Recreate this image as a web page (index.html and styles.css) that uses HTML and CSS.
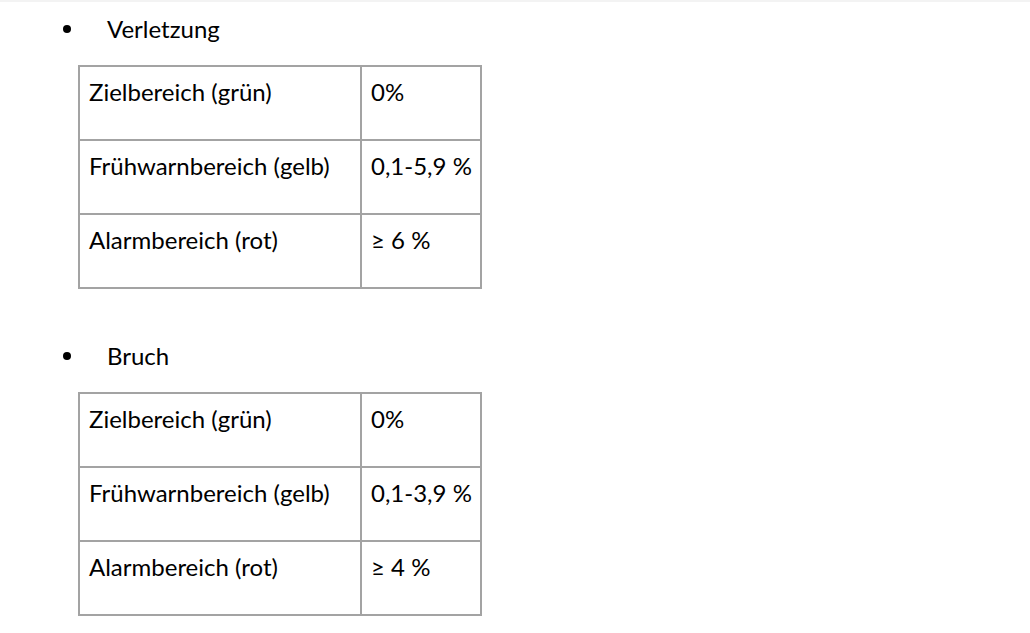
FILE: index.html
```html
<!DOCTYPE html>
<html lang="de">
<head>
<meta charset="utf-8">
<title>Schwellenwerte</title>
<link rel="stylesheet" href="styles.css">
</head>
<body>
<main class="page">
  <section class="block">
    <div class="item"><span class="bullet"></span><span class="item-text">Verletzung</span></div>
    <table class="ranges">
      <colgroup><col class="c1"><col class="c2"></colgroup>
      <tr><td>Zielbereich (grün)</td><td>0%</td></tr>
      <tr><td>Frühwarnbereich (gelb)</td><td>0,1-5,9 %</td></tr>
      <tr><td>Alarmbereich (rot)</td><td>≥ 6 %</td></tr>
    </table>
  </section>
  <section class="block second">
    <div class="item"><span class="bullet"></span><span class="item-text">Bruch</span></div>
    <table class="ranges">
      <colgroup><col class="c1"><col class="c2"></colgroup>
      <tr><td>Zielbereich (grün)</td><td>0%</td></tr>
      <tr><td>Frühwarnbereich (gelb)</td><td>0,1-3,9 %</td></tr>
      <tr><td>Alarmbereich (rot)</td><td>≥ 4 %</td></tr>
    </table>
  </section>
</main>
</body>
</html>
```

FILE: styles.css
```css
html, body {
  margin: 0;
  padding: 0;
  background: #ffffff;
}
body {
  font-family: "Lato", "Liberation Sans", sans-serif;
  font-size: 24px;
  color: #000000;
}
.page {
  border-top: 2px solid #f3f3f3;
  padding-top: 13px;
}
.block {
  display: flex;
  flex-direction: column;
}
.second {
  margin-top: 53px;
}
.item {
  display: flex;
  align-items: center;
  height: 27px;
  line-height: 27px;
  padding-left: 63px;
}
.bullet {
  width: 8px;
  height: 8px;
  border-radius: 50%;
  background: #000;
  margin-right: 36px;
}
.ranges {
  margin-top: 23px;
  margin-left: 78px;
  border-collapse: collapse;
  width: 402px;
  table-layout: fixed;
}
.c1 { width: 282px; }
.c2 { width: 120px; }
.ranges td {
  border: 2px solid #a3a3a3;
  height: 74px;
  padding: 11px 6px 0 9px;
  vertical-align: top;
  line-height: 27px;
  box-sizing: border-box;
}
```
